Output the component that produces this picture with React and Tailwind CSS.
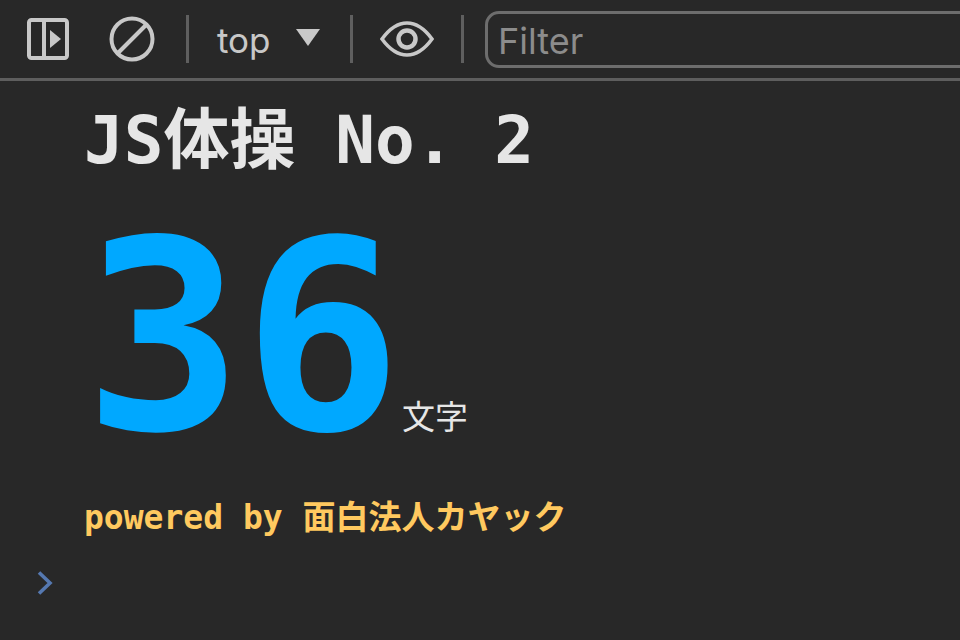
const mono = { fontFamily: '"DejaVu Sans Mono","Noto Sans CJK JP",monospace' };

function Sep() {
  return <div className="w-[3px] h-[48px] bg-[#5f5f5f] shrink-0" />;
}

export default function App() {
  return (
    <div className="w-[960px] h-[640px] overflow-hidden bg-[#282828] flex flex-col">
      <div className="h-[81px] shrink-0 border-b-[3px] border-[#5e5e5e] flex items-center pl-[27px] overflow-hidden">
        <svg width="43" height="43" viewBox="0 0 43 43" className="shrink-0">
          <rect x="2" y="2" width="38" height="38" rx="2.5" fill="none" stroke="#c8c8c8" strokeWidth="4" />
          <rect x="15" y="2" width="4" height="38" fill="#c8c8c8" />
          <path d="M23 12 L34 21 L23 30 Z" fill="#c8c8c8" />
        </svg>
        <svg width="46" height="46" viewBox="0 0 46 46" className="shrink-0 ml-[39px]">
          <circle cx="23" cy="23" r="20.5" fill="none" stroke="#c8c8c8" strokeWidth="4" />
          <path d="M9 37 L37 9" stroke="#c8c8c8" strokeWidth="4" />
        </svg>
        <div className="ml-[31px]"><Sep /></div>
        <span className="ml-[28px] mt-[3px] w-[53px] text-[35px] leading-none text-[#c8c8c8] font-['Inter',sans-serif]">top</span>
        <svg width="24" height="17" viewBox="0 0 24 17" className="shrink-0 ml-[26px] mt-[-4px]">
          <path d="M0 0 H24 L12 17 Z" fill="#c8c8c8" />
        </svg>
        <div className="ml-[30px]"><Sep /></div>
        <svg width="54" height="36" viewBox="0 0 54 36" className="shrink-0 ml-[27px]">
          <path d="M2 18 C10 7 18 2 27 2 C36 2 44 7 52 18 C44 29 36 34 27 34 C18 34 10 29 2 18 Z" fill="none" stroke="#c8c8c8" strokeWidth="3.6" />
          <circle cx="27" cy="18" r="8.5" fill="none" stroke="#c8c8c8" strokeWidth="4.5" />
        </svg>
        <div className="ml-[27px]"><Sep /></div>
        <div className="ml-[21px] w-[520px] h-[57px] shrink-0 border-[3px] border-[#6d6d6d] rounded-[14px] flex items-center pl-[10px]">
          <span className="mt-[3px] text-[36px] leading-none text-[#8c8c8c] font-['Inter',sans-serif]">Filter</span>
        </div>
      </div>
      <div className="pl-[84px]" style={mono}>
        <div className="mt-[22px] text-[66px] leading-[76px] font-bold text-[#e6e6e6] whitespace-pre">JS体操 No. 2</div>
        <div className="flex items-baseline mt-[14px] h-[290px]">
          <span className="text-[264px] leading-[290px] font-bold text-[#00a8ff]">36</span>
          <span className="text-[33px] leading-none text-[#e6e6e6] font-['Noto_Sans_CJK_JP',sans-serif]">文字</span>
        </div>
        <div className="mt-[15px] text-[33px] leading-[40px] font-bold text-[#ffc95f] whitespace-pre">powered by 面白法人カヤック</div>
      </div>
      <div className="pl-[37px] mt-[33px]">
        <svg width="16" height="24" viewBox="0 0 16 24">
          <path d="M2 1.5 L13 12 L2 22.5" fill="none" stroke="#5578b0" strokeWidth="3.6" />
        </svg>
      </div>
    </div>
  );
}
